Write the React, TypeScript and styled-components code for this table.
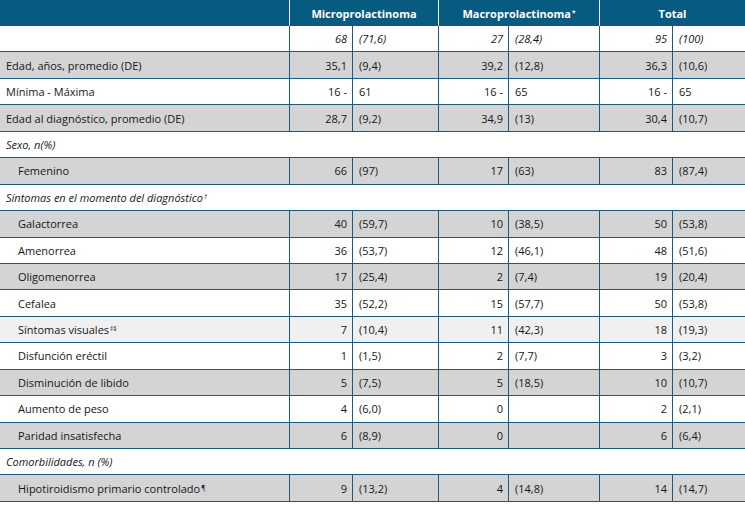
import styled, { createGlobalStyle } from 'styled-components'

const GlobalStyle = createGlobalStyle`
    html, body {
        margin: 0;
        padding: 0;
        background: #fff;
    }
    body {
        font-family: "Open Sans", "Noto Sans", sans-serif;
        font-size: 11px;
        color: #161616;
    }
`

type Tone = 'white' | 'gray' | 'light'

type DataRow = {
    type: 'data'
    label: string
    sup?: string
    indent?: boolean
    tone: Tone
    italic?: boolean
    vals: string[]
}

type SectionRow = {
    type: 'section'
    label: string
    sup?: string
}

type RowDef = DataRow | SectionRow

const rows: RowDef[] = [
    { type: 'data', label: '', tone: 'white', italic: true, vals: ['68', '(71,6)', '27', '(28,4)', '95', '(100)'] },
    { type: 'data', label: 'Edad, años, promedio (DE)', tone: 'gray', vals: ['35,1', '(9,4)', '39,2', '(12,8)', '36,3', '(10,6)'] },
    { type: 'data', label: 'Mínima - Máxima', tone: 'white', vals: ['16 -', '61', '16 -', '65', '16 -', '65'] },
    { type: 'data', label: 'Edad al diagnóstico, promedio (DE)', tone: 'gray', vals: ['28,7', '(9,2)', '34,9', '(13)', '30,4', '(10,7)'] },
    { type: 'section', label: 'Sexo, n(%)' },
    { type: 'data', label: 'Femenino', indent: true, tone: 'gray', vals: ['66', '(97)', '17', '(63)', '83', '(87,4)'] },
    { type: 'section', label: 'Síntomas en el momento del diagnóstico', sup: '†' },
    { type: 'data', label: 'Galactorrea', indent: true, tone: 'gray', vals: ['40', '(59,7)', '10', '(38,5)', '50', '(53,8)'] },
    { type: 'data', label: 'Amenorrea', indent: true, tone: 'white', vals: ['36', '(53,7)', '12', '(46,1)', '48', '(51,6)'] },
    { type: 'data', label: 'Oligomenorrea', indent: true, tone: 'gray', vals: ['17', '(25,4)', '2', '(7,4)', '19', '(20,4)'] },
    { type: 'data', label: 'Cefalea', indent: true, tone: 'white', vals: ['35', '(52,2)', '15', '(57,7)', '50', '(53,8)'] },
    { type: 'data', label: 'Síntomas visuales', sup: '‡§', indent: true, tone: 'light', vals: ['7', '(10,4)', '11', '(42,3)', '18', '(19,3)'] },
    { type: 'data', label: 'Disfunción eréctil', indent: true, tone: 'white', vals: ['1', '(1,5)', '2', '(7,7)', '3', '(3,2)'] },
    { type: 'data', label: 'Disminución de libido', indent: true, tone: 'gray', vals: ['5', '(7,5)', '5', '(18,5)', '10', '(10,7)'] },
    { type: 'data', label: 'Aumento de peso', indent: true, tone: 'white', vals: ['4', '(6,0)', '0', '', '2', '(2,1)'] },
    { type: 'data', label: 'Paridad insatisfecha', indent: true, tone: 'gray', vals: ['6', '(8,9)', '0', '', '6', '(6,4)'] },
    { type: 'section', label: 'Comorbilidades, n (%)' },
    { type: 'data', label: 'Hipotiroidismo primario controlado', sup: '¶', indent: true, tone: 'gray', vals: ['9', '(13,2)', '4', '(14,8)', '14', '(14,7)'] },
]

const toneColor: Record<Tone, string> = {
    white: '#ffffff',
    gray: '#d4d4d4',
    light: '#f0f0f0',
}

const BORDER = '#1d5a7d'

export default function App() {
    return (
        <>
            <GlobalStyle />
            <Table>
                <HeaderRow>
                    <HeadCell />
                    <HeadCell>Microprolactinoma</HeadCell>
                    <HeadCell>
                        Macroprolactinoma<Sup>*</Sup>
                    </HeadCell>
                    <HeadCell>Total</HeadCell>
                </HeaderRow>
                {rows.map((row, i) =>
                    row.type === 'section' ? (
                        <SectionLine key={i}>
                            {row.label}
                            {row.sup && <Sup>{row.sup}</Sup>}
                        </SectionLine>
                    ) : (
                        <Row key={i} $bg={toneColor[row.tone]} $italic={row.italic}>
                            <Label $indent={row.indent}>
                                {row.label}
                                {row.sup && <Sup>{row.sup}</Sup>}
                            </Label>
                            {row.vals.map((v, j) =>
                                j % 2 === 0 ? <Num key={j}>{v}</Num> : <Pct key={j}>{v}</Pct>
                            )}
                        </Row>
                    )
                )}
            </Table>
        </>
    )
}

const Table = styled.div`
    width: 745px;
    display: flex;
    flex-direction: column;
`

const HeaderRow = styled.div`
    display: grid;
    grid-template-columns: 290px 149px 161px 1fr;
    height: 26px;
    background-color: #075a80;
`

const HeadCell = styled.div`
    display: flex;
    align-items: center;
    justify-content: center;
    color: #fff;
    font-weight: 700;
    border-right: 1px solid #e8eef2;
    &:last-child {
        border-right: none;
    }
`

const Row = styled.div<{ $bg: string; $italic?: boolean }>`
    display: grid;
    grid-template-columns: 290px 63px 86px 70px 91px 73px 1fr;
    height: 26.44px;
    box-sizing: border-box;
    border-bottom: 1px solid ${BORDER};
    background-color: ${(p) => p.$bg};
    font-style: ${(p) => (p.$italic ? 'italic' : 'normal')};
`

const Cell = styled.div`
    display: flex;
    align-items: center;
    border-right: 1px solid ${BORDER};
    white-space: nowrap;
    &:last-child {
        border-right: none;
    }
`

const Label = styled(Cell)<{ $indent?: boolean }>`
    padding-left: ${(p) => (p.$indent ? '18px' : '6px')};
`

const Num = styled(Cell)`
    justify-content: flex-end;
    padding-right: 5px;
`

const Pct = styled(Cell)`
    padding-left: 6px;
`

const SectionLine = styled.div`
    display: flex;
    align-items: center;
    height: 26.44px;
    box-sizing: border-box;
    border-bottom: 1px solid ${BORDER};
    padding-left: 6px;
    font-style: italic;
    background: #fff;
`

const Sup = styled.sup`
    font-size: 6.5px;
    vertical-align: top;
    position: relative;
    top: -1px;
    margin-left: 1px;
`
